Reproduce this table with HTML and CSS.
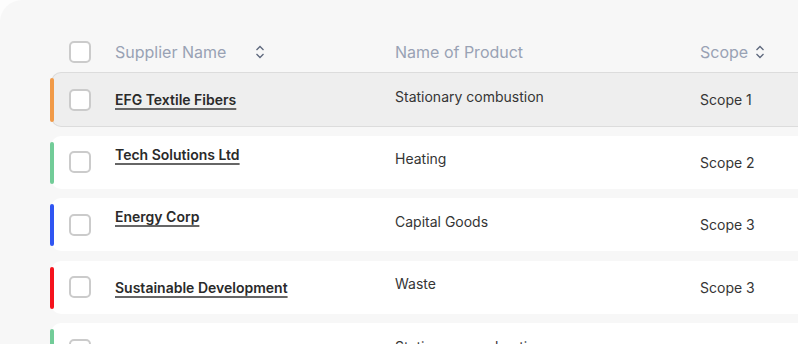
FILE: index.html
```html
<!DOCTYPE html>
<html lang="en">
<head>
  <meta charset="UTF-8">
  <title>Suppliers</title>
  <link rel="stylesheet" href="styles.css">
</head>
<body>
  <div class="panel">
    <div class="table">
      <div class="head">
        <span class="box"></span>
        <span class="col">Supplier Name
          <svg class="sort sort-name" viewBox="0 0 10 14" width="10" height="14"><path d="M1.5 5 L5 1.5 L8.5 5 M1.5 9 L5 12.5 L8.5 9"/></svg>
        </span>
        <span class="col">Name of Product</span>
        <span class="col">Scope
          <svg class="sort" viewBox="0 0 10 14" width="10" height="14"><path d="M1.5 5 L5 1.5 L8.5 5 M1.5 9 L5 12.5 L8.5 9"/></svg>
        </span>
      </div>
      <div class="row orange active">
        <span class="box"></span>
        <span class="name"><a>EFG Textile Fibers</a></span>
        <span class="product">Stationary combustion</span>
        <span class="scope">Scope 1</span>
      </div>
      <div class="row green">
        <span class="box"></span>
        <span class="name raised"><a>Tech Solutions Ltd</a></span>
        <span class="product">Heating</span>
        <span class="scope">Scope 2</span>
      </div>
      <div class="row blue">
        <span class="box"></span>
        <span class="name raised"><a>Energy Corp</a></span>
        <span class="product">Capital Goods</span>
        <span class="scope">Scope 3</span>
      </div>
      <div class="row red">
        <span class="box"></span>
        <span class="name"><a>Sustainable Development</a></span>
        <span class="product">Waste</span>
        <span class="scope">Scope 3</span>
      </div>
      <div class="row green">
        <span class="box"></span>
        <span class="name"><a>Green Energy Ltd</a></span>
        <span class="product">Stationary combustion</span>
        <span class="scope">Scope 1</span>
      </div>
    </div>
  </div>
</body>
</html>
```

FILE: styles.css
```css
html, body { margin: 0; padding: 0; height: 100%; overflow: hidden; background: #fdfdfd; font-family: Inter, "Liberation Sans", sans-serif; }
.panel { background: #f7f7f7; border-radius: 22px 0 0 0; padding: 41px 0 0 51px; width: 1000px; height: 400px; }
.table { display: flex; flex-direction: column; gap: 9.5px; }
.head, .row { display: grid; grid-template-columns: 46px 280px 305px 1fr; align-items: center; padding-left: 18px; }
.head { height: 22px; margin-bottom: 0.5px; color: #99a2b4; font-size: 16px; line-height: 22px; }
.col { display: flex; align-items: center; }
.sort { fill: none; stroke: #5d677c; stroke-width: 1.3; margin-left: 7px; }
.sort-name { margin-left: 29px; }
.box { width: 22px; height: 22px; box-sizing: border-box; border: 2px solid #cbcbcb; border-radius: 5px; background: #fff; }
.row { position: relative; height: 53px; box-sizing: border-box; background: #fff; border-radius: 10px 0 0 10px; font-size: 14px; color: #353535; }
.row.active { background: #eeeeee; border: 1px solid #dcdcdc; border-right: 0; padding-left: 17px; height: 55px; margin: -1px 0; }
.row::before { content: ""; position: absolute; left: -1px; top: 6px; bottom: 5px; width: 4px; border-radius: 2px; }
.row.active::before { left: -2px; top: 5px; bottom: 4px; }
.orange::before { background: #f19a48; }
.green::before { background: #72cc98; }
.blue::before { background: #2f55f2; }
.red::before { background: #f5131d; }
.name a { font-weight: 600; color: #2a2a2a; text-decoration: underline; text-decoration-color: #666; text-decoration-thickness: 1.5px; text-underline-offset: 3px; }
.name.raised { padding-bottom: 16px; }
.product { padding-bottom: 7px; }
```
